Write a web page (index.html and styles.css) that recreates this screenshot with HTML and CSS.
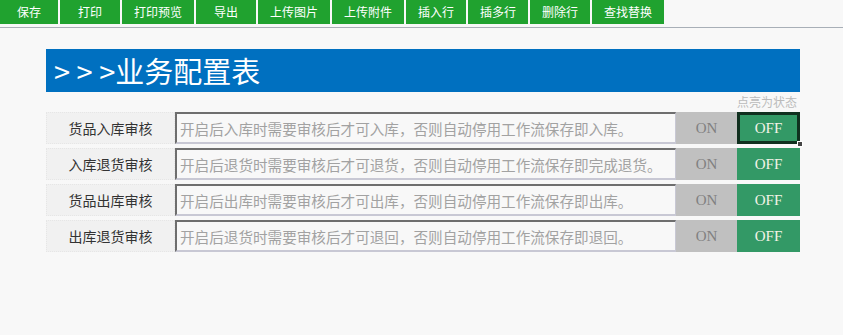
FILE: index.html
```html
<!DOCTYPE html>
<html lang="zh-CN">
<head>
    <meta charset="UTF-8">
    <meta name="viewport" content="width=device-width, initial-scale=1.0">
    <title>业务配置表</title>
    <link rel="stylesheet" href="styles.css">
</head>
<body>
    <div class="toolbar">
        <button class="tool-btn first">保存</button>
        <button class="tool-btn">打印</button>
        <button class="tool-btn">打印预览</button>
        <button class="tool-btn">导出</button>
        <button class="tool-btn">上传图片</button>
        <button class="tool-btn">上传附件</button>
        <button class="tool-btn">插入行</button>
        <button class="tool-btn">插多行</button>
        <button class="tool-btn">删除行</button>
        <button class="tool-btn">查找替换</button>
    </div>

    <div class="container">
        <h1 class="title">&gt; &gt; &gt;业务配置表</h1>
        <div class="hint">点亮为状态</div>

        <div class="config-list">
            <div class="config-row">
                <div class="config-label">货品入库审核</div>
                <input class="config-input" type="text" placeholder="开启后入库时需要审核后才可入库，否则自动停用工作流保存即入库。">
                <div class="switch switch-on">ON</div>
                <div class="switch switch-off selected">OFF<span class="handle"></span></div>
            </div>
            <div class="config-row">
                <div class="config-label">入库退货审核</div>
                <input class="config-input" type="text" placeholder="开启后退货时需要审核后才可退货，否则自动停用工作流保存即完成退货。">
                <div class="switch switch-on">ON</div>
                <div class="switch switch-off">OFF</div>
            </div>
            <div class="config-row">
                <div class="config-label">货品出库审核</div>
                <input class="config-input" type="text" placeholder="开启后出库时需要审核后才可出库，否则自动停用工作流保存即出库。">
                <div class="switch switch-on">ON</div>
                <div class="switch switch-off">OFF</div>
            </div>
            <div class="config-row">
                <div class="config-label">出库退货审核</div>
                <input class="config-input" type="text" placeholder="开启后退货时需要审核后才可退回，否则自动停用工作流保存即退回。">
                <div class="switch switch-on">ON</div>
                <div class="switch switch-off">OFF</div>
            </div>
        </div>
    </div>
</body>
</html>
```

FILE: styles.css
```css
:root {
    --toolbar-green: #20a22f;
    --title-blue: #0070c0;
    --page-bg: #f8f8f8;
    --label-bg: #f1f1f1;
    --on-bg: #c0c0c0;
    --off-bg: #339966;
}

* {
    margin: 0;
    padding: 0;
    box-sizing: border-box;
}

body {
    font-family: "Noto Sans CJK SC", "Noto Sans", sans-serif;
    background-color: var(--page-bg);
    color: #333;
    width: 843px;
    height: 335px;
    overflow: hidden;
}

.toolbar {
    display: flex;
    gap: 2px;
    padding-bottom: 3px;
    border-bottom: 1px solid #a8afb7;
}

.tool-btn {
    height: 24px;
    min-width: 60px;
    padding: 0 12px;
    background-color: var(--toolbar-green);
    color: #fff;
    border: none;
    font-family: inherit;
    font-size: 12px;
    line-height: 24px;
}

.tool-btn.first {
    min-width: 58px;
}

.container {
    width: 754px;
    margin: 21px 0 0 46px;
}

.title {
    height: 43px;
    padding-left: 8px;
    background-color: var(--title-blue);
    color: #fff;
    font-size: 29px;
    font-weight: 400;
    line-height: 43px;
}

.hint {
    height: 20px;
    padding-right: 3px;
    text-align: right;
    color: #bbb;
    font-size: 12px;
    line-height: 19px;
}

.config-list {
    display: flex;
    flex-direction: column;
    gap: 4px;
}

.config-row {
    display: flex;
    height: 32px;
}

.config-label {
    width: 129px;
    background-color: var(--label-bg);
    border: 1px dotted #e6e6e6;
    text-align: center;
    font-size: 14px;
    line-height: 30px;
    color: #333;
}

.config-input {
    width: 501px;
    height: 32px;
    padding: 0 3px;
    background-color: #f8f8f8;
    border-style: solid;
    border-width: 2px 1px 2px 2px;
    border-color: #6e6e6e #c8c8d4 #c8c8d4 #6e6e6e;
    font-family: inherit;
    font-size: 14.6px;
    outline: none;
}

.config-input::placeholder {
    color: #a2a2a2;
}

.switch {
    font-family: "Liberation Serif", serif;
    font-size: 15px;
    line-height: 32px;
    text-align: center;
}

.switch-on {
    width: 61px;
    background-color: var(--on-bg);
    color: #808080;
}

.switch-off {
    width: 63px;
    background-color: var(--off-bg);
    color: #f4f4e8;
}

.switch-off.selected {
    position: relative;
    box-shadow: inset 0 0 0 3px #10301f;
}

.handle {
    position: absolute;
    right: -3px;
    bottom: -3px;
    width: 6px;
    height: 6px;
    background-color: #444;
    border: 1px solid #fff;
}
```
